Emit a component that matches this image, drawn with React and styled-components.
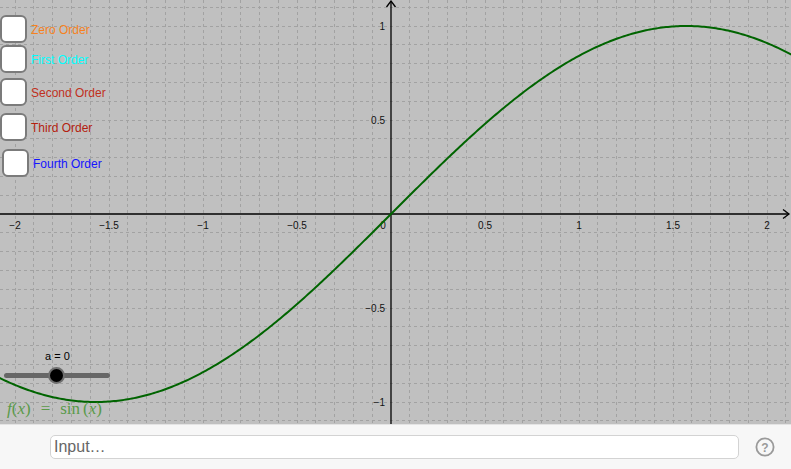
import React from "react";
import styled, { createGlobalStyle } from "styled-components";

const GlobalStyle = createGlobalStyle`
  html, body { margin: 0; padding: 0; overflow: hidden; background: #f7f7f7; }
  * { box-sizing: border-box; }
`;

const W = 791;
const H = 424;
const OX = 391;
const OY = 214;
const S = 188;
const STEP = S / 10;

const Page = styled.div`
  width: 791px;
  height: 469px;
  display: flex;
  flex-direction: column;
  font-family: "Liberation Sans", Arial, sans-serif;
`;

const GraphArea = styled.div`
  position: relative;
  height: ${H}px;
  background: #c0c0c0;
  overflow: hidden;
  flex: none;
`;

const Canvas = styled.svg`
  position: absolute;
  inset: 0;
  display: block;
`;

const CheckItem = styled.label`
  position: absolute;
  left: ${(p) => p.$left}px;
  top: ${(p) => p.$top}px;
  display: flex;
  align-items: center;
  gap: 4px;
  font-size: 12px;
  line-height: 14px;
  color: ${(p) => p.$color};
  cursor: pointer;
`;

const Box = styled.span`
  width: 27px;
  height: 28px;
  border: 2px solid #7b7b7b;
  border-radius: 6px;
  background: #fff;
  flex: none;
`;

const LabelText = styled.span`
  padding-top: 2px;
`;

const SliderWrap = styled.div`
  position: absolute;
  left: 4px;
  top: 346px;
  width: 106px;
  height: 40px;
`;

const SliderLabel = styled.div`
  position: absolute;
  left: 41px;
  top: 4px;
  font-size: 11px;
  color: #000;
  white-space: nowrap;
`;

const Track = styled.div`
  position: absolute;
  left: 0;
  top: 27px;
  width: 106px;
  height: 5px;
  border-radius: 3px;
  background: #676767;
`;

const Knob = styled.div`
  position: absolute;
  left: ${(p) => p.$x - 8}px;
  top: 21px;
  width: 17px;
  height: 17px;
  border-radius: 50%;
  background: #000;
  border: 2.5px solid #6f6f6f;
`;

const Formula = styled.div`
  position: absolute;
  left: 7px;
  top: 399px;
  font-family: "Liberation Serif", "Times New Roman", serif;
  font-size: 17px;
  color: #5a9a4a;
  white-space: nowrap;
`;

const It = styled.i`
  font-style: italic;
`;

const Op = styled.span`
  margin: 0 10px;
`;

const Fn = styled.span`
  margin-right: 3px;
`;

const InputBar = styled.div`
  flex: 1;
  display: flex;
  align-items: center;
  padding-left: 50px;
  gap: 16px;
  background: #f7f7f7;
  border-top: 1px solid #e4e4e4;
`;

const InputField = styled.input`
  width: 689px;
  height: 24px;
  border: 1px solid #d3d3d3;
  border-radius: 5px;
  background: #fff;
  padding: 0 3px;
  font-family: "Liberation Sans", Arial, sans-serif;
  font-size: 16px;
  color: #333;
  outline: none;
  &::placeholder { color: #666; }
`;

const HelpIcon = styled.svg`
  display: block;
  flex: none;
`;

const checks = [
  { label: "Zero Order", color: "#f5821f", top: 15, left: 0 },
  { label: "First Order", color: "#00ffff", top: 45, left: 0 },
  { label: "Second Order", color: "#c0301d", top: 78, left: 0 },
  { label: "Third Order", color: "#b4200f", top: 113, left: 0 },
  { label: "Fourth Order", color: "#1414ff", top: 149, left: 2 },
];

function buildCurve() {
  const pts = [];
  for (let px = -2; px <= W + 2; px += 2) {
    const x = (px - OX) / S;
    const y = OY - S * Math.sin(x);
    pts.push(`${px},${y.toFixed(2)}`);
  }
  return "M" + pts.join(" L");
}

const xLabels = [
  ["−2", -2],
  ["−1.5", -1.5],
  ["−1", -1],
  ["−0.5", -0.5],
  ["0.5", 0.5],
  ["1", 1],
  ["1.5", 1.5],
  ["2", 2],
];
const yLabels = [
  ["1", 1],
  ["0.5", 0.5],
  ["−0.5", -0.5],
  ["−1", -1],
];

function Graph() {
  const vLines = [];
  for (let k = -21; k <= 22; k++) {
    if (k === 0) continue;
    const x = OX + k * STEP;
    vLines.push(<line key={"v" + k} x1={x} y1={0} x2={x} y2={H} />);
  }
  const hLines = [];
  for (let k = -12; k <= 12; k++) {
    if (k === 0) continue;
    const y = OY + k * STEP;
    hLines.push(<line key={"h" + k} x1={0} y1={y} x2={W} y2={y} />);
  }
  return (
    <Canvas width={W} height={H} viewBox={`0 0 ${W} ${H}`}>
      <g stroke="#a2a2a2" strokeWidth="1" strokeDasharray="3 3" shapeRendering="crispEdges">
        {vLines}
        {hLines}
      </g>
      <g stroke="#000" strokeWidth="1.3" fill="none">
        <line x1={0} y1={OY} x2={789} y2={OY} />
        <polyline points="783,209.5 789,214 783,218.5" />
        <line x1={OX} y1={H} x2={OX} y2={1} />
        <polyline points="386.5,7 391,1 395.5,7" />
      </g>
      <g fontFamily="'Liberation Sans', Arial, sans-serif" fontSize="10" fill="#111">
        {xLabels.map(([t, v]) => (
          <text key={t} x={OX + v * S} y={229} textAnchor="middle">{t}</text>
        ))}
        <text x={383} y={229} textAnchor="middle">0</text>
        {yLabels.map(([t, v]) => (
          <text key={t} x={385} y={OY - v * S + 4} textAnchor="end">{t}</text>
        ))}
      </g>
      <path d={buildCurve()} stroke="#006400" strokeWidth="2" fill="none" />
    </Canvas>
  );
}

export default function App() {
  return (
    <Page>
      <GlobalStyle />
      <GraphArea>
        <Graph />
        {checks.map((c) => (
          <CheckItem key={c.label} $top={c.top} $left={c.left} $color={c.color}>
            <Box />
            <LabelText>{c.label}</LabelText>
          </CheckItem>
        ))}
        <SliderWrap>
          <SliderLabel>a = 0</SliderLabel>
          <Track />
          <Knob $x={52} />
        </SliderWrap>
        <Formula>
          <It>f</It>(<It>x</It>)<Op>=</Op><Fn>sin</Fn>(<It>x</It>)
        </Formula>
      </GraphArea>
      <InputBar>
        <InputField placeholder="Input…" />
        <HelpIcon width="20" height="20" viewBox="0 0 20 20">
          <circle cx="10" cy="10" r="8.6" fill="none" stroke="#9a9a9a" strokeWidth="1.8" />
          <text x="10" y="14.5" textAnchor="middle" fontFamily="'Liberation Sans', Arial, sans-serif" fontWeight="bold" fontSize="12" fill="#9a9a9a">?</text>
        </HelpIcon>
      </InputBar>
    </Page>
  );
}
